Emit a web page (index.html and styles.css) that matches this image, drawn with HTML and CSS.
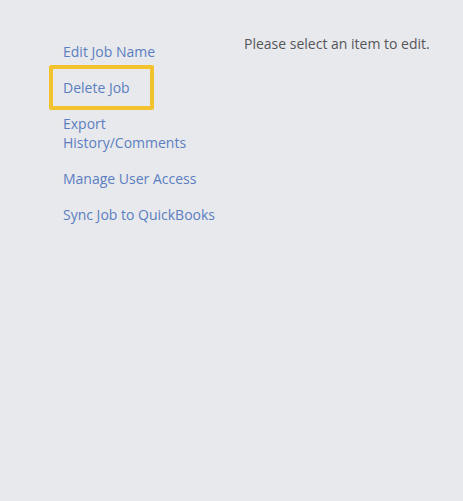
FILE: index.html
```html
<!DOCTYPE html>
<html>
<head>
<meta charset="utf-8">
<link rel="stylesheet" href="styles.css">
</head>
<body>
<div class="page">
  <ul class="menu">
    <li><a class="link" href="#">Edit Job Name</a></li>
    <li class="highlighted"><a class="link" href="#">Delete Job</a><span class="marker"></span></li>
    <li><a class="link" href="#">Export History/Comments</a></li>
    <li><a class="link" href="#">Manage User Access</a></li>
    <li><a class="link" href="#">Sync Job to QuickBooks</a></li>
  </ul>
  <div class="content">Please select an item to edit.</div>
</div>
</body>
</html>
```
FILE: styles.css
```css
html, body {
  margin: 0;
  padding: 0;
  background: #e8e9ed;
  height: 100%;
}
body {
  font-family: "Open Sans", "Liberation Sans", sans-serif;
  font-size: 14px;
  line-height: 19px;
}
.page {
  display: flex;
  align-items: flex-start;
  padding: 34px 0 0 63px;
}
.menu {
  list-style: none;
  margin: 8px 0 0 0;
  padding: 0;
  width: 156px;
  display: flex;
  flex-direction: column;
  gap: 17px;
}
.menu li {
  position: relative;
}
.link {
  color: #5b7ec0;
  text-decoration: none;
}
.marker {
  position: absolute;
  left: -14px;
  top: -13px;
  width: 97px;
  height: 37px;
  border: 4px solid #f3c22f;
  border-radius: 2px;
}
.content {
  margin-left: 25px;
  color: #555659;
}
```
